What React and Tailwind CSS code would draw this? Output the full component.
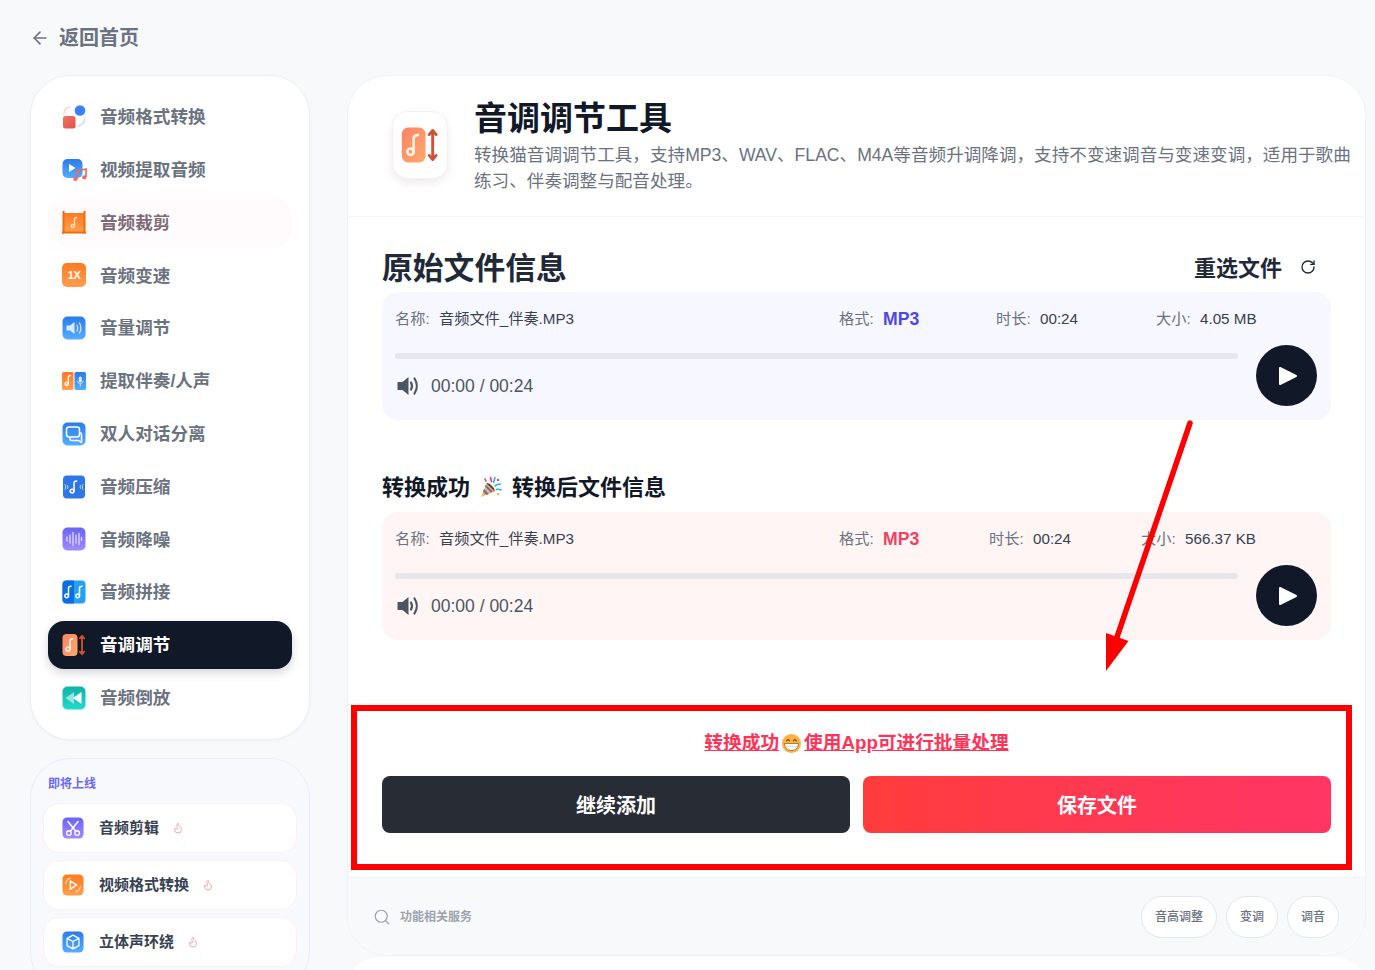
import React from "react";
import { ArrowLeft, RotateCw, Search, Flame } from "lucide-react";

const Note = ({ x = 0, y = 0, s = 1, c = "#fff" }) => (
  <g transform={`translate(${x} ${y}) scale(${s})`} fill="none" stroke={c} strokeWidth="1.3" strokeLinecap="round">
    <circle cx="-1.6" cy="3.4" r="1.6" />
    <path d="M0 3.4V-3.2c0-1.2.8-1.8 2.2-1.8" />
  </g>
);

const Defs = () => (
  <svg className="absolute h-0 w-0">
    <defs>
      <linearGradient id="gBlue" x1="0" y1="0" x2="0" y2="1">
        <stop offset="0" stopColor="#2b7be8" />
        <stop offset="1" stopColor="#56adff" />
      </linearGradient>
      <linearGradient id="gOrange" x1="0" y1="0" x2="0" y2="1">
        <stop offset="0" stopColor="#ff7a1f" />
        <stop offset="1" stopColor="#ffa04d" />
      </linearGradient>
      <linearGradient id="gPurple" x1="0" y1="0" x2="0" y2="1">
        <stop offset="0" stopColor="#6a63f6" />
        <stop offset="1" stopColor="#a08bff" />
      </linearGradient>
      <linearGradient id="gTeal" x1="0" y1="0" x2="0" y2="1">
        <stop offset="0" stopColor="#0fb3a4" />
        <stop offset="1" stopColor="#1fdccb" />
      </linearGradient>
      <linearGradient id="gCoral" x1="0" y1="0" x2="1" y2="1">
        <stop offset="0" stopColor="#fb8368" />
        <stop offset="1" stopColor="#fdab6a" />
      </linearGradient>
      <linearGradient id="gRed" x1="0" y1="0" x2="1" y2="1">
        <stop offset="0" stopColor="#ee7468" />
        <stop offset="1" stopColor="#e4504a" />
      </linearGradient>
    </defs>
  </svg>
);

const Tile = ({ children, fill = "url(#gBlue)", size = 24 }) => (
  <svg width={size} height={size} viewBox="0 0 24 24" className="shrink-0">
    <rect x="0.5" y="0.5" width="23" height="23" rx="5" fill={fill} />
    {children}
  </svg>
);

const PitchIcon = ({ size = 24 }) => (
  <svg width={size} height={size} viewBox="0 0 24 24" className="shrink-0">
    <rect x="0.5" y="1" width="15" height="22" rx="4" fill="url(#gCoral)" />
    <Note x={8} y={12} s={1.25} c="#fff3e8" />
    <path d="M20 3v18M17.8 5.4 20 2.8l2.2 2.6M17.8 18.6 20 21.2l2.2-2.6" fill="none" stroke="#cf5238" strokeWidth="1.8" strokeLinecap="round" strokeLinejoin="round" />
  </svg>
);

const icons = {
  format: (
    <svg width="24" height="24" viewBox="0 0 24 24" className="shrink-0">
      <rect x="1" y="11" width="12.5" height="12.5" rx="2.5" fill="url(#gRed)" />
      <circle cx="18" cy="5.5" r="5.3" fill="#3b82f6" />
      <path d="M2 9c0-4 2-6.500 6-7" fill="none" stroke="#fcd5cf" strokeWidth="1.6" strokeLinecap="round" />
      <path d="M22.500 13c0 4.500-2 7-6 8" fill="none" stroke="#c8defc" strokeWidth="1.6" strokeLinecap="round" />
    </svg>
  ),
  video: (
    <svg width="26" height="24" viewBox="0 0 26 24" className="shrink-0">
      <rect x="0.500" y="1" width="20" height="19" rx="5" fill="url(#gBlue)" />
      <path d="M7 6v8l6.500-4z" fill="#fff" />
      <path d="M15 21V13l9-2v8" fill="none" stroke="#f0695f" strokeWidth="1.700" />
      <circle cx="13.300" cy="21" r="2.100" fill="#f0695f" />
      <circle cx="22.300" cy="19.300" r="2.100" fill="#f0695f" />
    </svg>
  ),
  trim: (
    <svg width="24" height="24" viewBox="0 0 24 24" className="shrink-0">
      <rect x="1.500" y="2" width="21" height="19" fill="url(#gOrange)" />
      <path d="M1.500 0v22M22.500 0v22M0 21.500h24" stroke="#f26a0a" strokeWidth="2" strokeLinecap="round" />
      <Note x={12.500} y={11.500} c="#ffe7c7" />
    </svg>
  ),
  speed: (
    <div className="flex h-6 w-6 shrink-0 items-center justify-center rounded-[5px] bg-linear-to-b from-[#ff7a1f] to-[#ff9d50] text-[11px] font-bold tracking-[-0.5px] text-white">
      1X
    </div>
  ),
  volume: (
    <Tile>
      <path d="M4.500 9.500h3.500l4.500-3.500v12l-4.500-3.500H4.500z" fill="#dbeafe" />
      <path d="M15 9c1 1.800 1 4.200 0 6M17.500 7c1.700 3 1.700 7 0 10" fill="none" stroke="#dbeafe" strokeWidth="1.200" strokeLinecap="round" />
    </Tile>
  ),
  split: (
    <svg width="24" height="24" viewBox="0 0 24 24" className="shrink-0">
      <rect x="0" y="3" width="11.500" height="18" rx="1.500" fill="url(#gOrange)" />
      <rect x="12.500" y="3" width="11.500" height="18" rx="1.500" fill="url(#gBlue)" />
      <Note x={6.300} y={11.500} />
      <rect x="16.800" y="7.500" width="3" height="6" rx="1.500" fill="#dbeafe" />
      <path d="M15.500 12c0 3.500 5.600 3.500 5.600 0M18.300 15v2.500" fill="none" stroke="#dbeafe" strokeWidth="0.900" />
    </svg>
  ),
  chat: (
    <Tile>
      <rect x="4.500" y="5" width="13" height="10" rx="2.500" fill="none" stroke="#fff" strokeWidth="1.500" />
      <path d="M8 15.500v1.500c0 1 .8 1.500 1.500 1.500h7l3 2v-8c0-1-.5-1.800-1.800-1.800" fill="none" stroke="#fff" strokeWidth="1.500" strokeLinejoin="round" />
    </Tile>
  ),
  compress: (
    <svg width="24" height="24" viewBox="0 0 24 24" className="shrink-0">
      <rect x="1" y="0.500" width="22" height="23" rx="4" fill="#2f76e6" />
      <Note x={12} y={12} s={1.200} />
      <path d="M3 9.500c1 1.500 1 3.500 0 5M5.500 10.500c.5 1 .5 2 0 3M21 9.500c-1 1.500-1 3.500 0 5M18.500 10.500c-.5 1-.5 2 0 3" fill="none" stroke="#bfdbfe" strokeWidth="1" strokeLinecap="round" />
    </svg>
  ),
  denoise: (
    <Tile fill="url(#gPurple)">
      <path d="M5 10v4M8 8v8M11 5.500v13M14 8v8M17 6.500v11M19.500 10.500v3" stroke="#e0dbff" strokeWidth="1.300" strokeLinecap="round" />
    </Tile>
  ),
  merge: (
    <svg width="24" height="24" viewBox="0 0 24 24" className="shrink-0">
      <rect x="0.500" y="0.500" width="23" height="23" rx="4" fill="#27a0ee" />
      <path d="M12 .5H4.500a4 4 0 0 0-4 4v15a4 4 0 0 0 4 4H12z" fill="#0b6fe3" />
      <Note x={6.500} y={12} s={1.150} />
      <Note x={17.500} y={12} s={1.150} />
    </svg>
  ),
  pitch: <PitchIcon />,
  reverse: (
    <Tile fill="url(#gTeal)">
      <path d="M11 12 19.500 6v12z" fill="#fff" />
      <path d="M3.500 12l8.500-6v12z" fill="#fff" opacity="0.550" />
    </Tile>
  ),
  cut: (
    <Tile fill="url(#gPurple)" size={22}>
      <circle cx="7.500" cy="17.500" r="2.500" fill="none" stroke="#fff" strokeWidth="1.400" />
      <circle cx="16.500" cy="17.500" r="2.500" fill="none" stroke="#fff" strokeWidth="1.400" />
      <path d="M9 15.500 17.500 5M15 15.500 6.500 5" stroke="#fff" strokeWidth="1.600" strokeLinecap="round" />
    </Tile>
  ),
  videoFormat: (
    <Tile fill="url(#gOrange)" size={22}>
      <path d="M9 7.500v9l7-4.500z" fill="none" stroke="#fff" strokeWidth="1.500" strokeLinejoin="round" />
      <path d="M4 10c.7-3 2.500-4.800 5-5.500M20 14c-.7 3-2.500 4.800-5 5.500" fill="none" stroke="#ffe0c2" strokeWidth="1.200" strokeLinecap="round" />
    </Tile>
  ),
  surround: (
    <Tile size={22}>
      <path d="M12 4.500 18.500 8v8L12 19.500 5.500 16V8zM5.500 8 12 11.500 18.500 8M12 11.500v8" fill="none" stroke="#fff" strokeWidth="1.400" strokeLinejoin="round" />
    </Tile>
  ),
};

const navItems = [
  { label: "音频格式转换", icon: "format" },
  { label: "视频提取音频", icon: "video" },
  { label: "音频裁剪", icon: "trim", hover: true },
  { label: "音频变速", icon: "speed" },
  { label: "音量调节", icon: "volume" },
  { label: "提取伴奏/人声", icon: "split" },
  { label: "双人对话分离", icon: "chat" },
  { label: "音频压缩", icon: "compress" },
  { label: "音频降噪", icon: "denoise" },
  { label: "音频拼接", icon: "merge" },
  { label: "音调调节", icon: "pitch", active: true },
  { label: "音频倒放", icon: "reverse" },
];

const soonItems = [
  { label: "音频剪辑", icon: "cut" },
  { label: "视频格式转换", icon: "videoFormat" },
  { label: "立体声环绕", icon: "surround" },
];

const Sidebar = () => (
  <aside className="w-[280px] shrink-0">
    <nav className="flex flex-col gap-[4.8px] rounded-[40px] border border-[#eff0f3] bg-white px-[17px] pb-[17px] pt-[17px] shadow-[0_1px_3px_rgba(0,0,0,0.04)]">
      {navItems.map((item) => (
        <div
          key={item.label}
          className={
            item.active
              ? "flex h-12 items-center gap-[14px] rounded-2xl bg-[#111827] pl-[14px] text-white shadow-[0_4px_10px_rgba(17,24,39,0.18)]"
              : item.hover
              ? "flex h-12 items-center gap-[14px] rounded-2xl bg-[#fffbfc] pl-[14px] text-[#7d6a76]"
              : "flex h-12 items-center gap-[14px] rounded-2xl pl-[14px] text-[#6b7280]"
          }
        >
          <div className="flex w-6 justify-start">{icons[item.icon]}</div>
          <span className="pt-[1px] text-[17.6px] font-bold">{item.label}</span>
        </div>
      ))}
    </nav>
    <div className="mt-[18px] rounded-[40px] border border-[#eceef3] bg-[#f8f9fd] px-[12px] pb-6 pt-[16px]">
      <div className="pl-[5px] text-[12px] font-bold leading-[18px] text-[#6a6af4]">即将上线</div>
      <div className="mt-[10px] flex flex-col gap-[7px]">
        {soonItems.map((item) => (
          <div key={item.label} className="flex h-[50px] items-center rounded-2xl border border-[#fdf0f2] bg-white pl-[18px]">
            {icons[item.icon]}
            <span className="ml-[15px] text-[15px] font-bold text-[#374151]">{item.label}</span>
            <Flame className="ml-[13px] h-3 w-3 text-[#f8a5ab]" strokeWidth={2} />
          </div>
        ))}
      </div>
    </div>
  </aside>
);

const VolumeIcon = () => (
  <svg width="22" height="20" viewBox="0 0 22 20" className="shrink-0">
    <path d="M0.500 6h5L11.500 1v18l-6-5h-5z" fill="#4b5563" />
    <path d="M14 6.500c1.300 2.200 1.300 4.800 0 7" fill="none" stroke="#4b5563" strokeWidth="2.200" strokeLinecap="round" />
    <path d="M17.500 2.500c3 4.500 3 10.500 0 15" fill="none" stroke="#4b5563" strokeWidth="2.200" strokeLinecap="round" />
  </svg>
);

const Player = ({ bg, accent, nameW, formatW, durationW, size }) => (
  <div className={`h-[128px] rounded-2xl px-[13px] pt-[14px] ${bg}`}>
    <div className="flex h-6 items-center whitespace-nowrap pt-[2px] text-[15.2px] text-[#374151]">
      <div className="flex" style={{ width: nameW }}>
        <span className="w-[44px] text-[#6b7280]">名称:</span>
        <span>音频文件_伴奏.MP3</span>
      </div>
      <div className="flex items-center" style={{ width: formatW }}>
        <span className="w-[44px] text-[#6b7280]">格式:</span>
        <span className={`text-[17.6px] font-bold ${accent}`}>MP3</span>
      </div>
      <div className="flex" style={{ width: durationW }}>
        <span className="w-[44px] text-[#6b7280]">时长:</span>
        <span>00:24</span>
      </div>
      <div className="flex">
        <span className="w-[44px] text-[#6b7280]">大小:</span>
        <span>{size}</span>
      </div>
    </div>
    <div className="flex items-start">
      <div className="w-[843px]">
        <div className="mt-[23px] h-[6px] rounded-full bg-[#e5e7eb]" />
        <div className="mt-[15px] flex h-6 items-center gap-3 pl-[2px] text-[17.5px] text-[#4b5563]">
          <VolumeIcon />
          <span>00:00 / 00:24</span>
        </div>
      </div>
      <button className="ml-[18px] mt-[15px] flex h-[61px] w-[61px] items-center justify-center rounded-full bg-[#111827]">
        <svg width="22" height="22" viewBox="0 0 22 22" className="ml-[2px]">
          <path d="M3 3v16l16-8z" fill="#fff" stroke="#fff" strokeWidth="2" strokeLinejoin="round" />
        </svg>
      </button>
    </div>
  </div>
);

const PartyPopper = () => (
  <svg width="22" height="22" viewBox="0 0 22 22" className="shrink-0">
    <path d="M1 21 6.500 7.500l8 8z" fill="#f4b740" />
    <path d="M3 15.500l3.500 3.500 2.300-1.100-4.800-4.800zM5 10.500l6 6 1.800-.8-7-7z" fill="#5b6ee1" />
    <path d="M6.500 7.500l8 8c1-1-1-4.500-3.200-6.200-2.200-2-4-2.700-4.800-1.800z" fill="#6b3f2a" />
    <path d="M15 1.500l-1.500 5M20.500 8c-2 0-4 .5-5.500 2M21 14c-1.500-.7-3-1-4.500-.5" fill="none" stroke="#22b8e6" strokeWidth="1.600" strokeLinecap="round" />
    <path d="M10.500 1.500 11.500 5.500M5 3 6 5" fill="none" stroke="#e8348f" strokeWidth="1.600" strokeLinecap="round" />
    <circle cx="18" cy="4" r="1.200" fill="#e8348f" />
    <circle cx="18" cy="18" r="1.200" fill="#f4b740" />
  </svg>
);

const GrinFace = () => (
  <svg width="19" height="19" viewBox="0 0 18 18" className="mx-[3px] inline-block align-[-4px]">
    <circle cx="9" cy="9" r="9" fill="#fbb040" />
    <path d="M4.500 6.500c.5-1.300 2-1.300 2.500 0M11 6.500c.5-1.300 2-1.300 2.500 0" fill="none" stroke="#5c3b14" strokeWidth="1" strokeLinecap="round" />
    <path d="M2.500 9h13c0 4-2.500 6.500-6.500 6.500S2.500 13 2.500 9z" fill="#fff" stroke="#7a4a12" strokeWidth="0.600" />
    <path d="M3.200 12h11.600" stroke="#d9c7b0" strokeWidth="0.700" />
  </svg>
);

const Annotations = () => (
  <>
    <div className="pointer-events-none absolute left-[351px] top-[705px] h-[165px] w-[1001px] border-[6px] border-[#ff0000]" />
    <svg className="pointer-events-none absolute left-0 top-0" width="1375" height="970">
      <path d="M1190 423 1116 640" stroke="#ff0000" strokeWidth="5.500" strokeLinecap="round" />
      <path d="M1106 633l22.500 8-22.500 30z" fill="#ff0000" />
    </svg>
  </>
);

const tags = ["音高调整", "变调", "调音"];

const Main = () => (
  <main className="w-[1019px] shrink-0">
    <div className="rounded-[40px] border border-[#f1f2f5] bg-white">
      <header className="flex h-[141px] border-b border-[#f6f6f8] pl-[44px] pr-[12px]">
        <div className="mt-[35px] flex h-[68px] w-[56px] shrink-0 items-center justify-center rounded-2xl border border-[#fbeef0] bg-white shadow-[0_4px_10px_rgba(0,0,0,0.08)]">
          <PitchIcon size={38} />
        </div>
        <div className="ml-[26px] pt-[23px]">
          <h1 className="text-[33px] font-bold leading-10 text-[#111827]">音调调节工具</h1>
          <p className="mt-[3px] text-[17.6px] leading-[26px] text-[#6b7280]">
            转换猫音调调节工具，支持MP3、WAV、FLAC、M4A等音频升调降调，支持不变速调音与变速变调，适用于歌曲练习、伴奏调整与配音处理。
          </p>
        </div>
      </header>

      <div className="px-[34px]">
        <div className="mt-[25px] flex h-[50px] items-center justify-between">
          <h2 className="pt-[4px] text-[30.8px] font-bold text-[#1f2937]">原始文件信息</h2>
          <div className="mr-[15px] flex items-center gap-[18px]">
            <span className="pt-[2px] text-[22px] font-bold text-[#1f2937]">重选文件</span>
            <RotateCw className="h-4 w-4 text-[#1f2937]" strokeWidth={2} />
          </div>
        </div>
        <Player bg="bg-[#f7f7ff]" accent="text-[#4f46e5]" nameW={444} formatW={157} durationW={160} size="4.05 MB" />

        <div className="mt-[42px] flex h-[50px] items-center gap-[10px] text-[22px] font-bold text-[#111827]">
          <span>转换成功</span>
          <PartyPopper />
          <span>转换后文件信息</span>
        </div>
        <Player bg="bg-[#fff5f5]" accent="text-[#f43f5e]" nameW={444} formatW={150} durationW={152} size="566.37 KB" />

        <div className="mt-[88px] flex h-7 items-center justify-center pt-[2px]">
          <a className="text-[18.7px] font-bold leading-7 text-[#ff3358] underline">
            转换成功
            <GrinFace />
            使用App可进行批量处理
          </a>
        </div>
        <div className="mt-5 flex gap-[13px]">
          <button className="h-[57px] flex-1 rounded-lg bg-[#282c34] pt-[2px] text-[20px] font-bold text-white">继续添加</button>
          <button className="h-[57px] flex-1 rounded-lg bg-linear-to-r from-[#ff3c3c] to-[#ff3564] pt-[2px] text-[20px] font-bold text-white">保存文件</button>
        </div>
      </div>

      <footer className="mt-11 flex h-[78px] items-center justify-between rounded-b-[40px] border-t border-[#f1f2f5] bg-[#f8f9fb] pl-[25px] pr-[26px]">
        <div className="flex items-center gap-[9px]">
          <Search className="h-[18px] w-[18px] text-[#9ca3af]" strokeWidth={1.6} />
          <span className="text-[12px] font-bold text-[#9ca3af]">功能相关服务</span>
        </div>
        <div className="flex gap-[9px]">
          {tags.map((tag) => (
            <span key={tag} className="flex h-[42px] items-center rounded-full border border-[#e5e7eb] bg-white px-[13px] text-[12px] font-medium text-[#6b7280]">
              {tag}
            </span>
          ))}
        </div>
      </footer>
    </div>
    <div className="mt-[1px] h-[60px] rounded-t-[32px] bg-white" />
  </main>
);

export default function App() {
  return (
    <div className="relative h-[970px] overflow-hidden bg-[#f8f9fb] font-['Liberation_Sans','Noto_Sans_CJK_SC',sans-serif]">
      <Defs />
      <div className="flex h-[75px] items-center gap-[9px] pl-[30px] text-[#6b7280]">
        <ArrowLeft className="h-5 w-5" strokeWidth={2} />
        <span className="text-[20px] font-bold">返回首页</span>
      </div>
      <div className="flex gap-[37px] pl-[30px]">
        <Sidebar />
        <Main />
      </div>
      <Annotations />
    </div>
  );
}
